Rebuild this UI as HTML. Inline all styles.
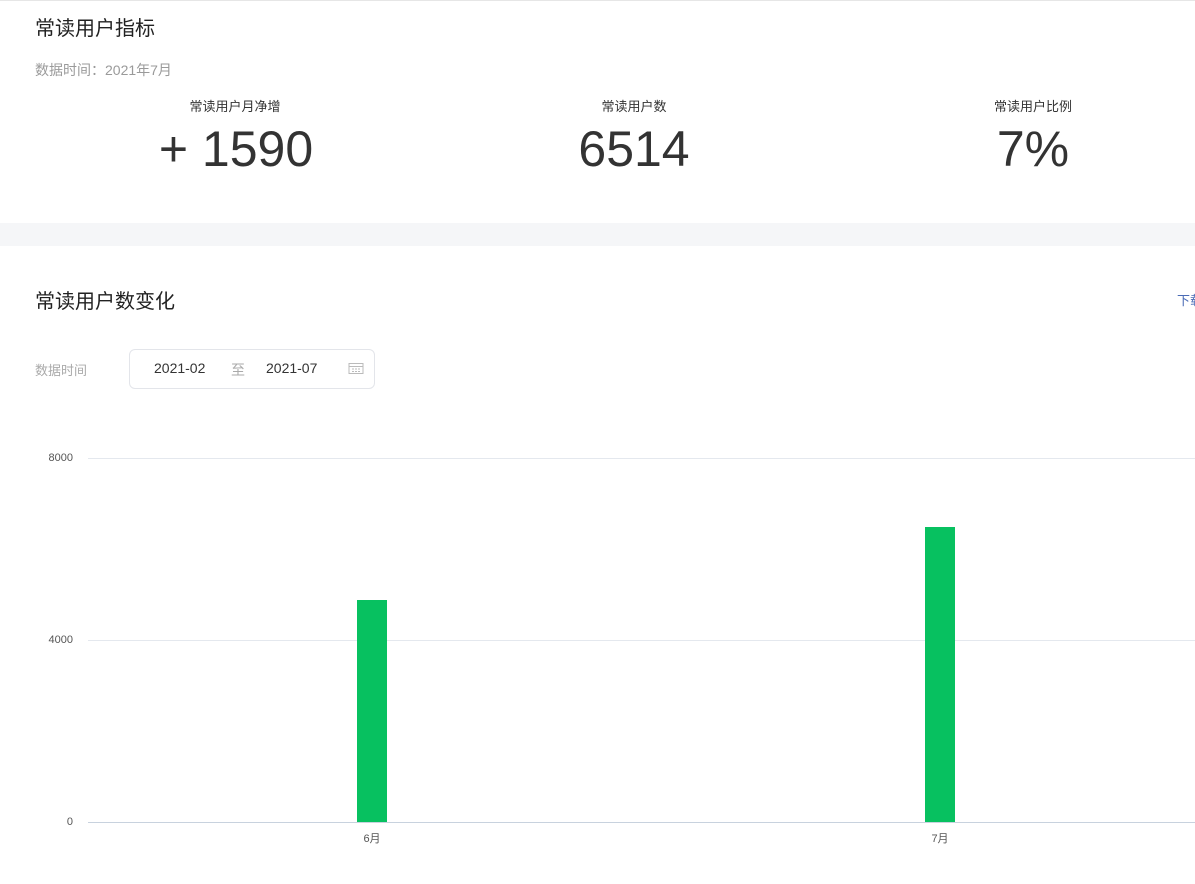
<!DOCTYPE html>
<html><head><meta charset="utf-8"><style>
body{margin:0;width:1195px;height:884px;overflow:hidden;background:#fff;font-family:"Liberation Sans","Noto Sans CJK SC",sans-serif;position:relative}
.a{position:absolute;white-space:nowrap}
.c{transform:translateX(-50%)}
.g{position:absolute;left:88px;width:1107px;height:1px;background:#e4e8ee}
.yl{position:absolute;font-size:11px;color:#555;text-align:right;width:40px;left:33px}
</style></head><body>
<div class="a" style="left:0;top:0;width:1195px;height:1px;background:#e6e6e6"></div>
<div class="a" style="left:35px;top:12px;font-size:20px;color:#222">常读用户指标</div>
<div class="a" style="left:35px;top:60px;font-size:14px;color:#9a9a9a">数据时间：2021年7月</div>
<div class="a c" style="left:235px;top:96px;font-size:13px;color:#333">常读用户月净增</div>
<div class="a c" style="left:634px;top:96px;font-size:13px;color:#333">常读用户数</div>
<div class="a c" style="left:1033px;top:96px;font-size:13px;color:#333">常读用户比例</div>
<div class="a c" style="left:236px;top:120px;font-size:50px;color:#333">+ 1590</div>
<div class="a c" style="left:634px;top:120px;font-size:50px;color:#333">6514</div>
<div class="a c" style="left:1033px;top:120px;font-size:50px;color:#333">7%</div>
<div class="a" style="left:0;top:223px;width:1195px;height:23px;background:#f5f6f8"></div>
<div class="a" style="left:35px;top:285px;font-size:20px;color:#222">常读用户数变化</div>
<div class="a" style="left:1177px;top:290px;font-size:13px;color:#4a6bb5">下载</div>
<div class="a" style="left:35px;top:360px;font-size:13px;color:#aaa">数据时间</div>
<div class="a" style="left:129px;top:349px;width:244px;height:38px;border:1px solid #e3e5ea;border-radius:6px"></div>
<div class="a" style="left:154px;top:360px;font-size:14px;color:#333">2021-02</div>
<div class="a" style="left:231px;top:360px;font-size:14px;color:#aaa">至</div>
<div class="a" style="left:266px;top:360px;font-size:14px;color:#333">2021-07</div>
<svg class="a" style="left:348px;top:362px" width="16" height="13" viewBox="0 0 16 13"><rect x="1" y="1.5" width="14" height="10" fill="none" stroke="#bbb"/><path d="M1 4.5h14M4 7h2M7 7h2M10 7h2M4 9.5h2M7 9.5h2M10 9.5h2" stroke="#bbb"/></svg>
<div class="g" style="top:458px"></div>
<div class="g" style="top:640px"></div>
<div class="g" style="top:822px;background:#c8d2de"></div>
<div class="yl" style="top:452px">8000</div>
<div class="yl" style="top:634px">4000</div>
<div class="yl" style="top:816px">0</div>
<div class="a" style="left:357px;top:600px;width:30px;height:222px;background:#07c160"></div>
<div class="a" style="left:925px;top:527px;width:30px;height:295px;background:#07c160"></div>
<div class="a c" style="left:372px;top:830px;font-size:11px;color:#555">6月</div>
<div class="a c" style="left:940px;top:830px;font-size:11px;color:#555">7月</div>
</body></html>
